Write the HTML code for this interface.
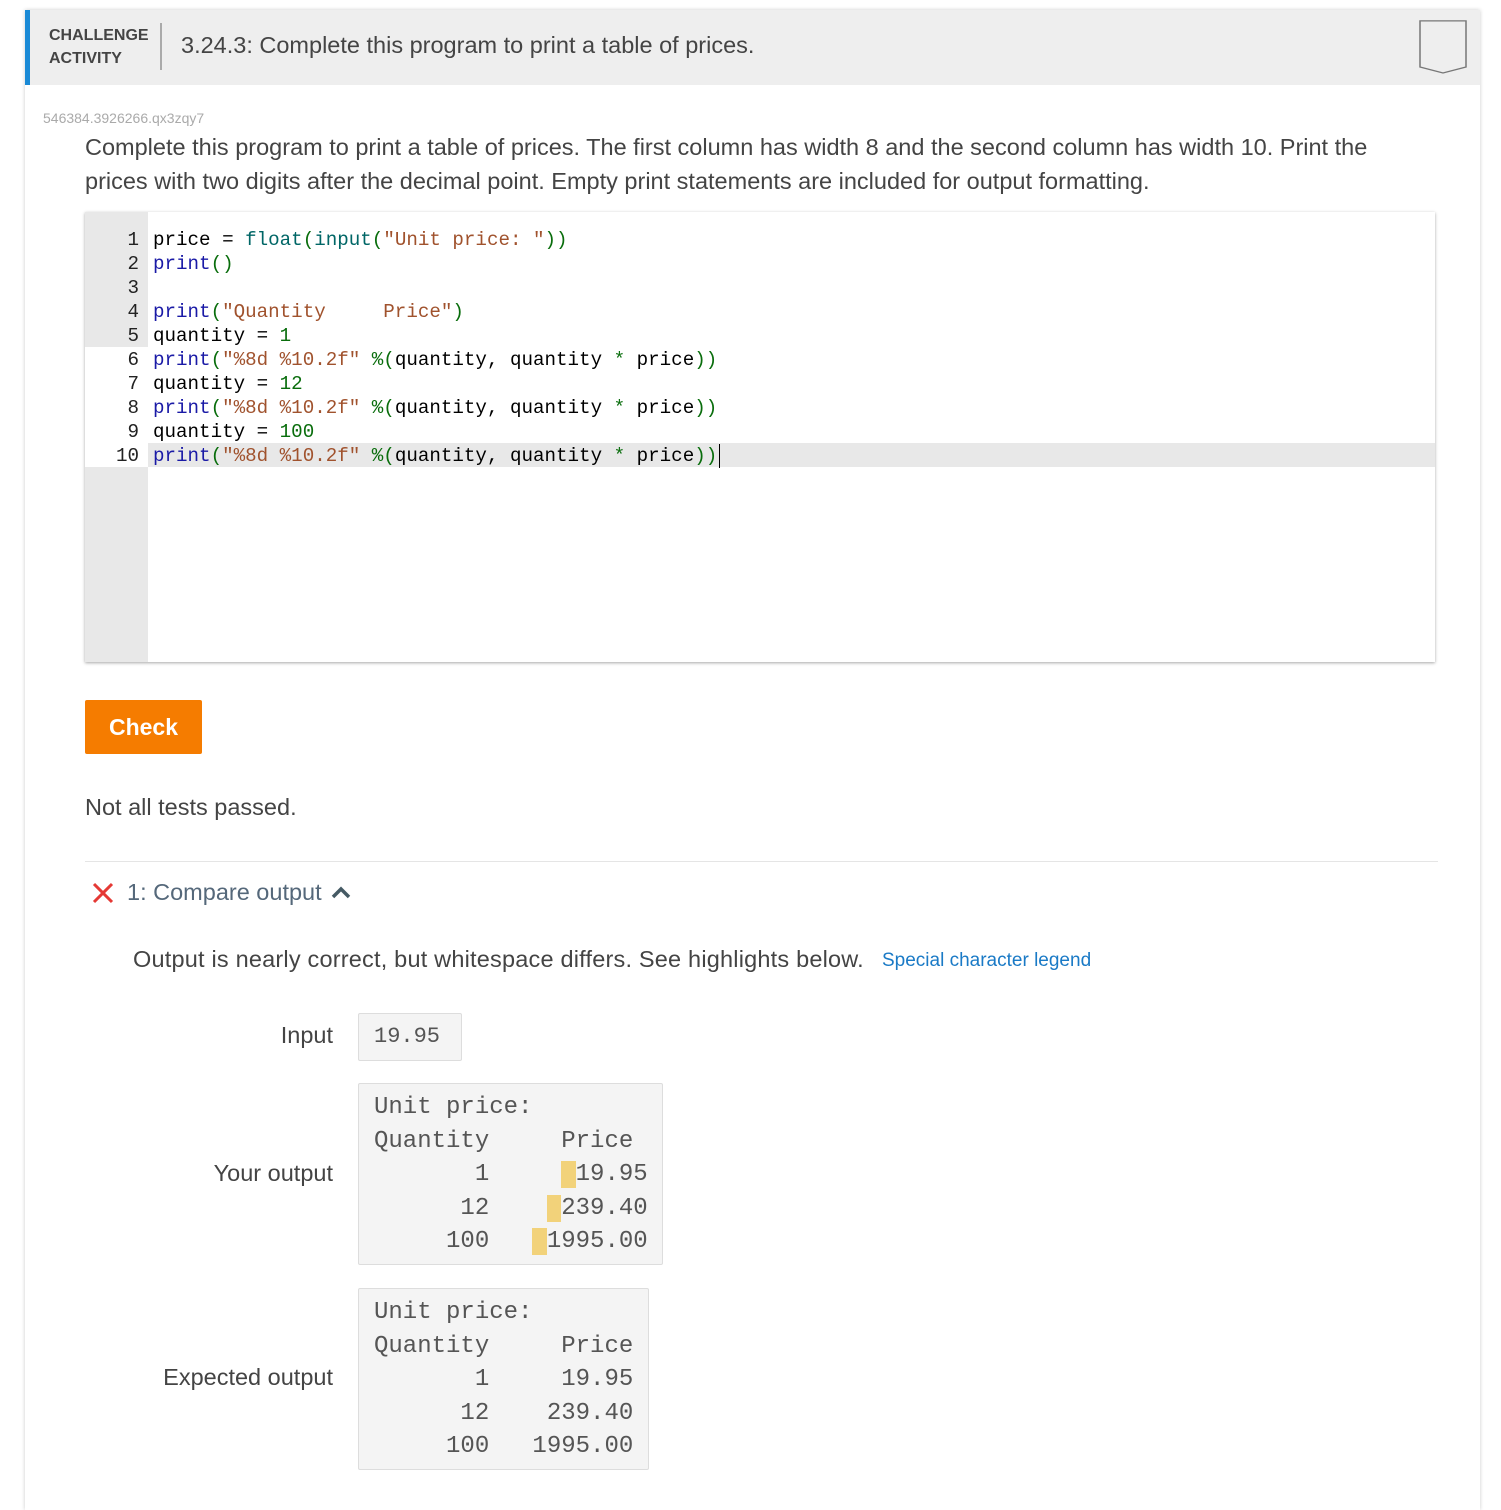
<!DOCTYPE html>
<html><head><meta charset="utf-8"><style>
*{margin:0;padding:0;box-sizing:border-box}
body{width:1501px;height:1492px;background:#fff;font-family:"Liberation Sans",sans-serif;color:#333;position:relative;overflow:hidden}
.card{position:absolute;left:25px;top:10px;width:1455px;height:1500px;background:#fff;box-shadow:0 0 4px rgba(0,0,0,.2)}
.hdr{position:absolute;left:0;top:0;width:1455px;height:75px;background:#eee;border-left:5px solid #1a8ad6}
.abs{position:absolute}
.mono{font-family:"Liberation Mono",monospace}
.code{position:absolute;left:85px;top:212px;width:1350px;height:450px;background:#fff;box-shadow:0 1px 3px rgba(0,0,0,.35)}
.gut{position:absolute;left:0;top:0;width:63px;height:450px;background:#e8e8e8}
.ln{position:absolute;left:0;width:1350px;height:24px;font-size:19.2px;line-height:24px;white-space:pre}
.ln .n{position:absolute;left:0;width:54px;text-align:right;color:#222}
.ln .t{position:absolute;left:68px;color:#000}
.k{color:#1a1aa6}.s{color:#a0522d}.g{color:#096d0c}.f{color:#066}
.box{position:absolute;background:#f4f4f4;border:1px solid #ddd;border-radius:2px;font-family:"Liberation Mono",monospace;font-size:24px;color:#555;white-space:pre}
.lbl{position:absolute;font-size:23.5px;color:#444;text-align:right;width:250px;left:83px}
.hl{background:#f2d27a}
</style></head><body>
<div class="card">
<div class="hdr">
<div class="abs" style="left:19px;top:14px;font-size:16px;font-weight:bold;color:#444;line-height:23px">CHALLENGE<br>ACTIVITY</div>
<div class="abs" style="left:130px;top:13px;width:2px;height:47px;background:#aaa"></div>
<div class="abs" style="left:151px;top:22px;font-size:23.5px;color:#444">3.24.3: Complete this program to print a table of prices.</div>
<svg class="abs" style="left:1388px;top:10px" width="52" height="58"><path d="M1 1H47V56L24 63L1 56Z" fill="none" stroke="#777" stroke-width="1.5" transform="translate(1,0) scale(1,0.84)"/></svg>
</div>
</div>
<div class="abs" style="left:43px;top:110px;font-size:14px;color:#aaa">546384.3926266.qx3zqy7</div>
<div class="abs" style="left:85px;top:130px;width:1310px;font-size:23.5px;line-height:34px;color:#444">Complete this program to print a table of prices. The first column has width 8 and the second column has width 10. Print the prices with two digits after the decimal point. Empty print statements are included for output formatting.</div>
<div class="code mono">
<div class="gut"></div>
<div class="abs" style="left:0;top:135px;width:63px;height:120px;background:#fff"></div>
<div class="abs" style="left:63px;top:231px;width:1287px;height:24px;background:#e8e8e8"></div>
<div class="ln" style="top:16px"><span class="n">1</span><span class="t">price = <span class="f">float</span><span class="g">(</span><span class="f">input</span><span class="g">(</span><span class="s">"Unit price: "</span><span class="g">))</span></span></div>
<div class="ln" style="top:40px"><span class="n">2</span><span class="t"><span class="k">print</span><span class="g">()</span></span></div>
<div class="ln" style="top:64px"><span class="n">3</span></div>
<div class="ln" style="top:88px"><span class="n">4</span><span class="t"><span class="k">print</span><span class="g">(</span><span class="s">"Quantity     Price"</span><span class="g">)</span></span></div>
<div class="ln" style="top:112px"><span class="n">5</span><span class="t">quantity = <span class="g">1</span></span></div>
<div class="ln" style="top:136px"><span class="n">6</span><span class="t"><span class="k">print</span><span class="g">(</span><span class="s">"%8d %10.2f"</span> <span class="g">%(</span>quantity, quantity <span class="g">*</span> price<span class="g">))</span></span></div>
<div class="ln" style="top:160px"><span class="n">7</span><span class="t">quantity = <span class="g">12</span></span></div>
<div class="ln" style="top:184px"><span class="n">8</span><span class="t"><span class="k">print</span><span class="g">(</span><span class="s">"%8d %10.2f"</span> <span class="g">%(</span>quantity, quantity <span class="g">*</span> price<span class="g">))</span></span></div>
<div class="ln" style="top:208px"><span class="n">9</span><span class="t">quantity = <span class="g">100</span></span></div>
<div class="ln" style="top:232px"><span class="n">10</span><span class="t"><span class="k">print</span><span class="g">(</span><span class="s">"%8d %10.2f"</span> <span class="g">%(</span>quantity, quantity <span class="g">*</span> price<span class="g">))</span></span></div>
<div class="abs" style="left:634px;top:232px;width:1px;height:24px;background:#000"></div>
</div>
<div class="abs" style="left:85px;top:700px;width:117px;height:54px;background:#f57c00;border-radius:2px;color:#fff;font-weight:bold;font-size:23px;text-align:center;line-height:54px">Check</div>
<div class="abs" style="left:85px;top:794px;font-size:23.5px;color:#444">Not all tests passed.</div>
<div class="abs" style="left:85px;top:861px;width:1353px;height:1px;background:#e5e5e5"></div>
<svg class="abs" style="left:91px;top:881px" width="24" height="24"><path d="M3 3L21 21M21 3L3 21" stroke="#e53935" stroke-width="3"/></svg>
<div class="abs" style="left:127px;top:879px;font-size:23.5px;color:#55687a">1: Compare output</div>
<svg class="abs" style="left:330px;top:884px" width="22" height="18"><path d="M3 13L11 5L19 13" fill="none" stroke="#455a64" stroke-width="3.5"/></svg>
<div class="abs" style="left:133px;top:946px;font-size:23.5px;color:#444;letter-spacing:0.2px">Output is nearly correct, but whitespace differs. See highlights below.</div>
<div class="abs" style="left:882px;top:950px;font-size:19px;color:#1a7ac6">Special character legend</div>
<div class="lbl" style="top:1022px">Input</div>
<div class="box" style="left:358px;top:1013px;width:104px;height:48px;padding:9px 15px;font-size:22px;line-height:28px">19.95</div>
<div class="lbl" style="top:1160px">Your output</div>
<div class="box" style="left:358px;top:1083px;width:305px;height:182px;padding:7px 15px;line-height:33.5px">Unit price:
Quantity     Price
       1     <span class="hl"> </span>19.95
      12    <span class="hl"> </span>239.40
     100   <span class="hl"> </span>1995.00</div>
<div class="lbl" style="top:1364px">Expected output</div>
<div class="box" style="left:358px;top:1288px;width:291px;height:182px;padding:7px 15px;line-height:33.5px">Unit price:
Quantity     Price
       1     19.95
      12    239.40
     100   1995.00</div>
</body></html>
